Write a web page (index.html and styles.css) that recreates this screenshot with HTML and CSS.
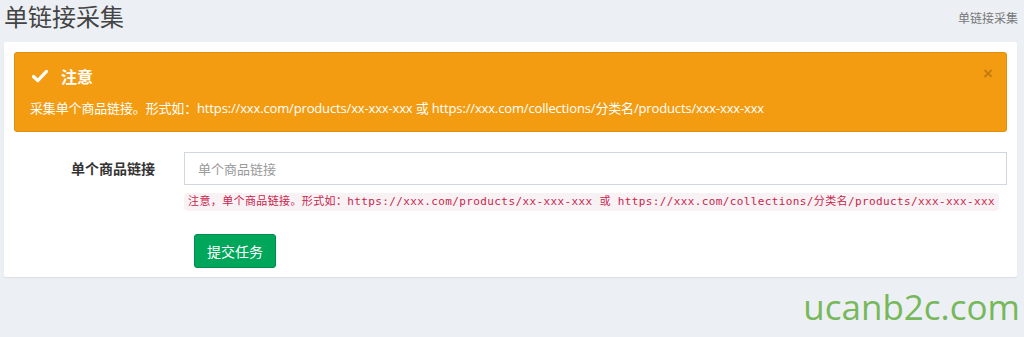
FILE: index.html
```html
<!DOCTYPE html>
<html lang="zh-CN">
<head>
  <meta charset="UTF-8">
  <title>单链接采集</title>
  <link rel="stylesheet" href="styles.css">
</head>
<body>
  <div class="content-header">
    <h1>单链接采集</h1>
    <div class="breadcrumb">单链接采集</div>
  </div>

  <div class="box">
    <div class="alert">
      <button class="close">×</button>
      <h4>
        <svg class="icon-check" viewBox="0 0 16 14" width="16" height="14">
          <path d="M1.5 7.5 L5.8 11.6 L14.5 2.4" fill="none" stroke="#fff" stroke-width="3.2" stroke-linecap="round" stroke-linejoin="round"/>
        </svg>
        注意
      </h4>
      <p>采集单个商品链接。形式如：https://xxx.com/products/xx-xxx-xxx 或 https://xxx.com/collections/分类名/products/xxx-xxx-xxx</p>
    </div>

    <div class="form-row">
      <label class="form-label" for="link">单个商品链接</label>
      <div class="form-field">
        <input class="form-input" id="link" type="text" placeholder="单个商品链接">
        <code class="help">注意，单个商品链接。形式如：https://xxx.com/products/xx-xxx-xxx 或 https://xxx.com/collections/分类名/products/xxx-xxx-xxx</code>
      </div>
    </div>

    <div class="form-actions">
      <button class="btn-submit">提交任务</button>
    </div>
  </div>

  <div class="watermark">ucanb2c.com</div>
</body>
</html>
```

FILE: styles.css
```css
body {
  margin: 0;
  padding: 0;
  background-color: #ecf0f5;
  font-family: "Open Sans", "Noto Sans CJK SC", sans-serif;
  color: #333;
  overflow: hidden;
}

.content-header {
  display: flex;
  justify-content: space-between;
  align-items: flex-start;
  height: 42px;
  padding: 0 6px 0 4px;
}

.content-header h1 {
  margin: 0;
  padding-top: 1px;
  font-size: 24px;
  font-weight: normal;
  line-height: 30px;
  color: #444;
  font-family: "Noto Sans CJK SC", sans-serif;
}

.breadcrumb {
  margin-top: 9px;
  font-size: 12px;
  color: #777;
  font-family: "Noto Sans CJK SC", sans-serif;
}

.box {
  margin: 0 7px 0 4px;
  padding: 10px 10px 9px;
  background-color: #fff;
  border-radius: 2px;
  box-shadow: 0 1px 1px rgba(0, 0, 0, 0.08);
}

.alert {
  position: relative;
  background-color: #f39c12;
  border: 1px solid #e08e0b;
  border-radius: 3px;
  padding: 9px 15px 13px;
  color: #fff;
}

.alert h4 {
  margin: 0;
  display: flex;
  align-items: center;
  font-size: 16px;
  line-height: 28px;
  font-family: "Noto Sans CJK SC", sans-serif;
  font-weight: bold;
}

.icon-check {
  margin: 0 13px 0 2px;
}

.alert p {
  margin: 8px 0 0;
  font-size: 13px;
  line-height: 20px;
  letter-spacing: -0.15px;
}

.close {
  position: absolute;
  top: 12px;
  right: 13px;
  background: transparent;
  border: none;
  padding: 0;
  font-size: 17px;
  line-height: 18px;
  color: #000;
  opacity: 0.2;
  font-family: "Liberation Sans", sans-serif;
  font-weight: bold;
}

.form-row {
  display: flex;
  margin-top: 20px;
}

.form-label {
  width: 170px;
  flex-shrink: 0;
  padding: 7px 29px 0 0;
  box-sizing: border-box;
  text-align: right;
  font-size: 14px;
  font-weight: bold;
  line-height: 18px;
  color: #333;
  font-family: "Noto Sans CJK SC", sans-serif;
}

.form-field {
  flex: 1;
}

.form-input {
  display: block;
  width: 100%;
  height: 33px;
  box-sizing: border-box;
  border: 1px solid #d2d6de;
  padding: 6px 13px;
  font-size: 13px;
  font-family: "Noto Sans CJK SC", sans-serif;
  outline: none;
}

.form-input::placeholder {
  color: #999;
}

.help {
  display: inline-block;
  margin-top: 8px;
  padding: 1px 4px;
  background-color: #f9f2f4;
  color: #c7254e;
  border-radius: 4px;
  font-family: "DejaVu Sans Mono", "Noto Sans CJK SC", monospace;
  font-size: 11px;
  line-height: 16px;
  letter-spacing: 0.38px;
}

.form-actions {
  padding: 23px 0 0 180px;
}

.btn-submit {
  background-color: #00a65a;
  border: 1px solid #008d4c;
  border-radius: 3px;
  color: #fff;
  font-size: 14px;
  font-family: "Noto Sans CJK SC", sans-serif;
  padding: 6px 12px;
  line-height: 20px;
}

.watermark {
  text-align: right;
  padding: 6px 4px 0 0;
  font-family: "Open Sans", sans-serif;
  font-size: 35px;
  color: #77b85a;
  line-height: 48px;
}
```
